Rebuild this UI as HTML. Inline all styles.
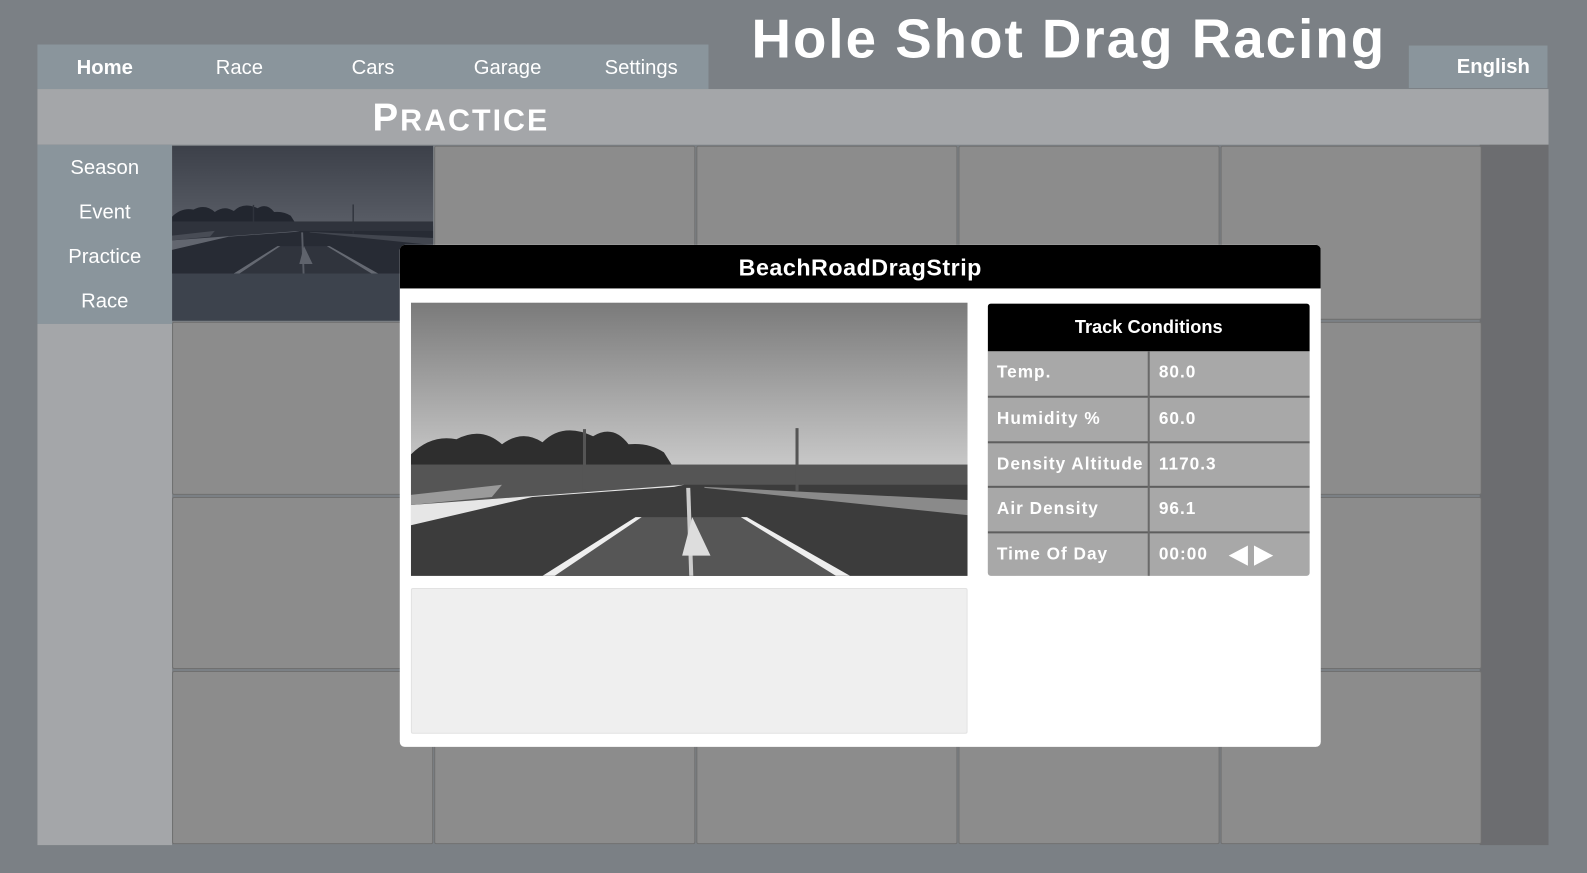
<!DOCTYPE html>
<html><head><meta charset="utf-8"><style>
*{margin:0;padding:0;box-sizing:border-box}
html,body{width:1587px;height:873px;overflow:hidden}
body{background:#7b8085;position:relative;font-family:"Liberation Sans",sans-serif}
#w{position:absolute;left:0;top:0;width:1568px;height:863px;transform:scale(1.0121);transform-origin:0 0}
.abs{position:absolute}
.nav{left:37px;top:44px;width:663px;height:44px;background:#8a959c}
.nav span{position:absolute;top:12px;color:#fff;font-size:20px;width:133px;text-align:center}
.title{left:700px;top:8px;width:712px;text-align:center;color:#fff;font-weight:bold;font-size:54px;letter-spacing:2px}
.eng{left:1392px;top:45px;width:137px;height:42px;background:#8a959c;color:#fff;font-weight:bold;font-size:20px;text-align:center;line-height:42px;padding-left:30px}
.band{left:37px;top:88px;width:1493px;height:55px;background:#a4a6a9}
.prac{left:368px;top:96px;color:#fff;font-weight:bold;font-size:38px;letter-spacing:2px}
.prac small{font-size:30px}
.side{left:37px;top:143px;width:133px;height:177px;background:#8a959c}
.side span{position:absolute;width:133px;text-align:center;color:#fff;font-size:20px}
.sideb{left:37px;top:320px;width:133px;height:515px;background:#a4a6a9}
.right{left:1462px;top:143px;width:68px;height:692px;background:#6c6d70}
.cell{position:absolute;background:#8c8c8c;border:1px solid #707070;border-radius:2px}
.modal{left:395px;top:242px;width:910px;height:496px;background:#fff;border-radius:5px;overflow:hidden}
.mh{height:43px;background:#000;color:#fff;font-weight:bold;font-size:23px;text-align:center;line-height:44px;letter-spacing:.5px}
.tbl{left:581px;top:58px;width:318px;height:269px;background:#a8a8a8;border-radius:3px;overflow:hidden}
.th{height:47px;background:#000;color:#fff;font-weight:bold;font-size:18px;text-align:center;line-height:46px}
.row{height:44.4px;border-top:2px solid #5e5e5e;position:relative;color:#fff;font-weight:bold;font-size:17px;letter-spacing:1px}
.th+.row{border-top:none}
.row .k{position:absolute;left:9px;top:11px;white-space:nowrap}
.row .v{position:absolute;left:169px;top:11px;white-space:nowrap}
.vl{position:absolute;left:158px;top:47px;width:2px;height:222px;background:#6a6a6a}
.tri{position:absolute;top:12px;width:0;height:0;border-top:10px solid transparent;border-bottom:10px solid transparent}
</style></head><body><div id="w">
<div class="abs nav">
<span style="left:0;font-weight:bold">Home</span><span style="left:133px">Race</span><span style="left:265px">Cars</span><span style="left:398px">Garage</span><span style="left:530px">Settings</span>
</div>
<div class="abs title">Hole Shot Drag Racing</div>
<div class="abs eng">English</div>
<div class="abs band"></div>
<div class="abs prac">P<small>RACTICE</small></div>
<div class="abs side">
<span style="top:12px">Season</span><span style="top:56px">Event</span><span style="top:100px">Practice</span><span style="top:144px">Race</span>
</div>
<div class="abs sideb"></div>
<div class="abs right"></div>
<div id="grid"></div>
<svg class="abs" style="left:170px;top:144px" width="258" height="173" viewBox="0 0 550 370" preserveAspectRatio="none">
<use href="#scene"/><rect width="550" height="370" fill="#1c2230" opacity=".65"/></svg>
<div class="abs modal">
<div class="mh">BeachRoadDragStrip</div>
<svg class="abs" style="left:11px;top:57px" width="550" height="270" viewBox="0 0 550 270">
<defs><g id="scene">
<linearGradient id="sky" x1="0" y1="0" x2="0" y2="1"><stop offset="0" stop-color="#7a7a7a"/><stop offset="1" stop-color="#d6d6d6"/></linearGradient>
<rect width="550" height="190" fill="url(#sky)"/>
<path d="M0 150 Q20 130 45 135 Q70 122 90 140 Q110 125 130 138 Q150 118 180 132 Q200 120 215 140 Q235 138 250 148 L270 180 L0 190Z" fill="#2e2e2e"/>
<path d="M285 180 L290 170 Q330 168 360 172 Q420 165 470 170 Q520 165 550 170 L550 190 L285 190Z" fill="#3a3a3a"/>
<rect x="0" y="160" width="550" height="110" fill="#555"/>
<path d="M0 200 L270 180 L274 180 L550 180 L550 270 L0 270Z" fill="#3c3c3c"/>
<path d="M0 200 L0 220 L120 192 L260 182 L270 180Z" fill="#e6e6e6"/>
<path d="M0 190 L0 200 L80 192 L90 180Z" fill="#9a9a9a"/>
<path d="M290 182 L550 195 L550 210 L290 183Z" fill="#8a8a8a"/>
<path d="M130 270 L222 212 L330 212 L430 270Z" fill="#565656"/>
<path d="M130 270 L222 212 L228 212 L142 270Z" fill="#eee"/>
<path d="M420 270 L326 212 L332 212 L434 270Z" fill="#eee"/>
<path d="M272 183 L276 183 L279 270 L275 270Z" fill="#ccc"/>
<path d="M278 212 L268 250 L296 250Z" fill="#ddd"/>
<rect x="170" y="125" width="3" height="60" fill="#555"/><rect x="380" y="124" width="3" height="62" fill="#555"/>
</g></defs>
<use href="#scene"/>
</svg>
<div class="abs" style="left:11px;top:339px;width:550px;height:144px;background:#efefef;border:1px solid #e2e2e2;border-radius:2px"></div>
<div class="abs tbl">
<div class="th">Track Conditions</div>
<div class="row"><span class="k">Temp.</span><span class="v">80.0</span></div>
<div class="row"><span class="k">Humidity %</span><span class="v">60.0</span></div>
<div class="row"><span class="k">Density Altitude</span><span class="v">1170.3</span></div>
<div class="row"><span class="k">Air Density</span><span class="v">96.1</span></div>
<div class="row"><span class="k">Time Of Day</span><span class="v">00:00</span>
<div class="tri" style="left:238px;border-right:19px solid #fff"></div>
<div class="tri" style="left:263px;border-left:19px solid #fff"></div></div>
<div class="vl"></div>
</div>
</div>
<script>
var g=document.getElementById('grid'),h='';
var ys=[144,318,491,663],hs=[172,171,170,171];
for(var r=0;r<4;r++)for(var c=0;c<5;c++){if(r==0&&c==0)continue;h+='<div class="cell" style="left:'+(170+c*259)+'px;top:'+ys[r]+'px;width:258px;height:'+hs[r]+'px"></div>';}
g.innerHTML=h;
</script>
</div></body></html>
